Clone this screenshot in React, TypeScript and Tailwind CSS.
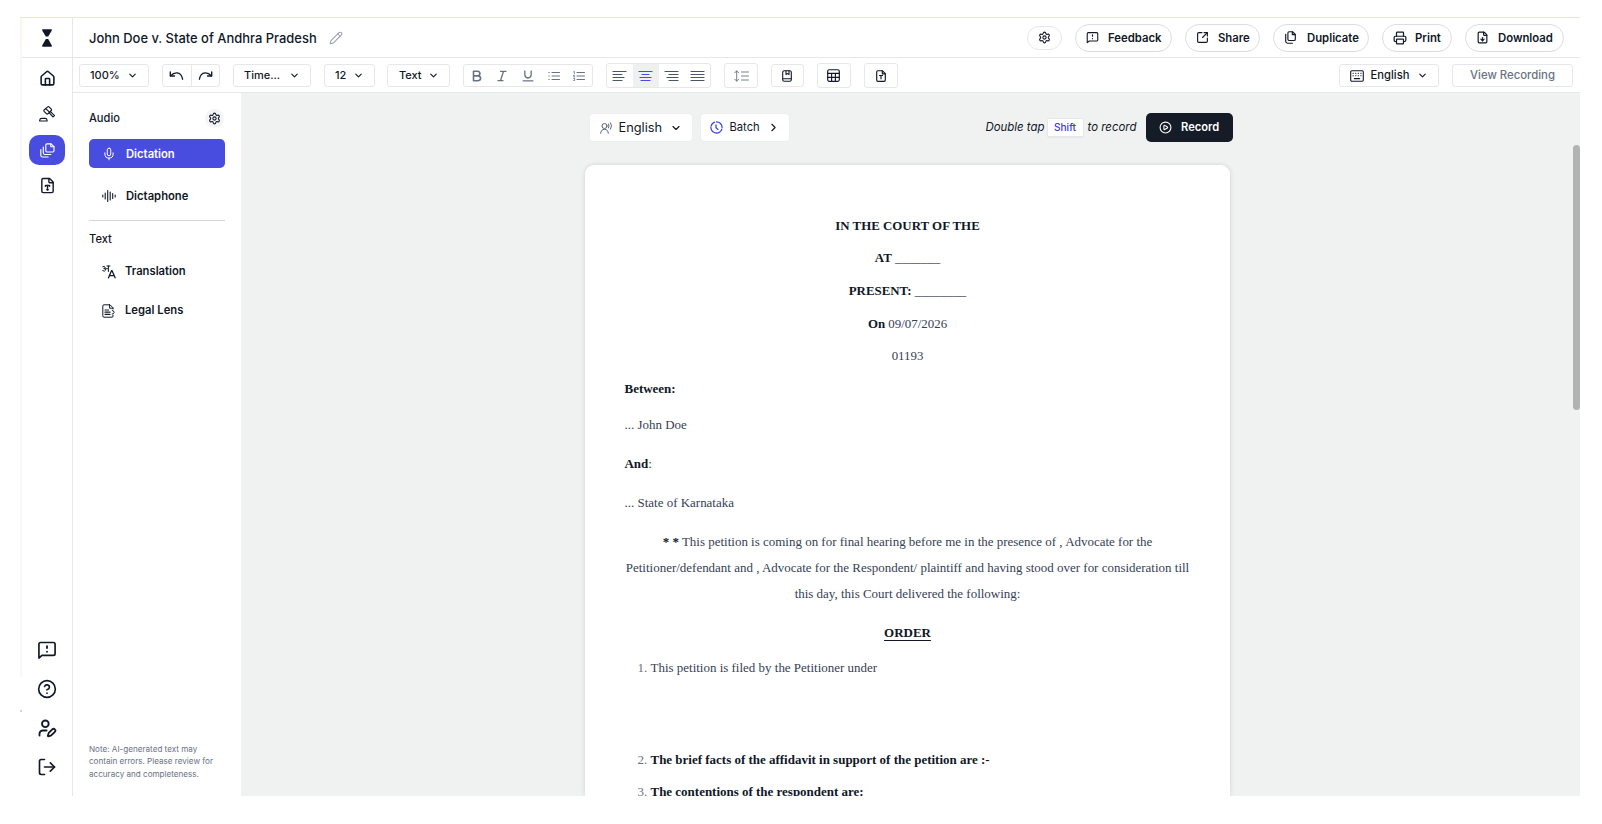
import React from "react";
import type { ReactNode } from "react";
import {
  ChevronDown,
  ChevronRight,
  CirclePlay,
  CircleQuestionMark,
  FileDown,
  FileType,
  House,
  LogOut,
  Mic,
  Pencil,
  Printer,
  Settings,
  SquareArrowOutUpRight,
  UserPen,
} from "lucide-react";

type IconProps = { className?: string };

const stroke = {
  fill: "none",
  stroke: "currentColor",
  strokeLinecap: "round" as const,
  strokeLinejoin: "round" as const,
};

function HourglassLogo() {
  return (
    <svg className="h-[18px] w-[10px] text-[#111827]" viewBox="0 0 10 18" fill="currentColor">
      <path d="M0.3 0.3h9.4v1.5L6.2 7.6H3.8L0.3 1.8z" />
      <path d="M3.8 10h2.4l3.5 6.2v1.6H0.3v-1.6z" />
    </svg>
  );
}

function GavelIcon({ className }: IconProps) {
  return (
    <svg className={className} viewBox="0 0 16 16" {...stroke} strokeWidth={1.150}>
      <path d="M5.100 4 8.700.900q.7-.5 1.300 0l2.300 2.300q.5.700 0 1.300L8.900 7.800q-.7.5-1.300 0L5.100 5.300q-.5-.7 0-1.300z" />
      <path d="M6.800 2.600l3.900 3.800M10.300 6.900l3.700 4 1.500-1.300-4-4" />
      <path d="M.7 15v-.8q.2-1.800 2-1.800h3.400q1.800 0 2 1.800v.8z" />
    </svg>
  );
}

function PagesIcon({ className }: IconProps) {
  return (
    <svg className={className} viewBox="0 0 15 15" {...stroke} strokeWidth={1.150}>
      <path d="M7 .8h4l3 2.800v4.200q0 1.200-1.200 1.200H7Q5.800 9 5.800 7.800V2Q5.800.8 7 .8z" />
      <path d="M10.800.8v2.900h3.100" />
      <path d="M3.300 4v5.700q0 1.800 1.800 1.800h5.700" />
      <path d="M.8 6.600v5.600Q.8 14 2.600 14h5.500" />
    </svg>
  );
}

function DuplicateIcon() {
  return (
    <svg className="h-[13px] w-[11px]" viewBox="0 0 11 13" {...stroke} strokeWidth={1.150}>
      <path d="M4.200.7h3.300l2.800 2.800v4.700q0 1.300-1.300 1.300H4.200Q2.900 9.500 2.900 8.200V2Q2.900.700 4.200.700z" />
      <path d="M7.300.8v2.800h2.900M.7 3.300v7q0 1.900 1.900 1.900h4.800" />
    </svg>
  );
}

function MessageIcon({ className }: IconProps) {
  return (
    <svg className={className} viewBox="0 0 24 24" {...stroke} strokeWidth={2}>
      <path d="M2.300 21.600V5q0-2 2-2h15.400q2 0 2 2v11.500q0 2-2 2H6z" />
      <path d="M12 7.300v2.400M12 13.900v.2" strokeWidth={2.200} />
    </svg>
  );
}

function WaveIcon({ className }: IconProps) {
  return (
    <svg className={className} viewBox="0 0 14 14" {...stroke} strokeWidth={1.100}>
      <path d="M.8 6v2M3.200 4v6M5.700 1.500v11M8.200 3v8M10.700 4.500v5M13.200 6v2" />
    </svg>
  );
}

function TranslateIcon({ className }: IconProps) {
  return (
    <svg className={className} viewBox="0 0 14 14" {...stroke} strokeWidth={1}>
      <path d="M.8 1.700q2-.9 2.400.5.1 1.200-1.500 1.300 2 0 1.900 1.600Q3 6.900.7 5.700M3.600 3.700h1.900M5 1h3M6.400 1v5.500" />
      <path d="M6.500 12.800 9.600 5.600h.4l3.100 7.200M7.600 10.600h4.400" strokeWidth={1.300} />
    </svg>
  );
}

function LensIcon({ className }: IconProps) {
  return (
    <svg className={className} viewBox="0 0 13 14" {...stroke} strokeWidth={1}>
      <path d="M11 5V3.800L8 .8H2Q.8.800.8 2v9.800Q.8 13.200 2 13.200h8q1 0 1-1v-1" />
      <path d="M7.600.8v3.400H11" />
      <path d="M3 6h3.500M3 8.200h5M3 10.300h5" strokeWidth={1.200} />
      <path d="M10.200 6.400q2 .3 1.900 2-.2 1.600-1.900 1.700" />
    </svg>
  );
}

function UndoIcon({ className }: IconProps) {
  return (
    <svg className={className} viewBox="0 0 15 10" {...stroke} strokeWidth={1.350}>
      <path d="M1.300 1v4h4.200" />
      <path d="M1.700 4.700Q4.500 1.700 8 1.900q4.500.4 5.600 6.300" />
    </svg>
  );
}

function AlignIcon({ lines }: { lines: [number, number][] }) {
  return (
    <svg className="h-[12px] w-[15px]" viewBox="0 0 15 12" {...stroke} strokeWidth={1.200}>
      {lines.map(([from, to], i) => (
        <path key={i} d={`M${from} ${1.500 + i * 3}H${to}`} />
      ))}
    </svg>
  );
}

function BulletListIcon({ numbered }: { numbered?: boolean }) {
  return (
    <svg className="h-[12px] w-[12px]" viewBox="0 0 12 12" {...stroke} strokeWidth={1.100}>
      <path d="M4 2.500h7.500M4 6h7.500M4 9.500h7.500" />
      {numbered ? (
        <path d="M.6 1.800l.8-.5v2.500M.5 5.500h1.200L.6 7h1.200M.6 8.500h1.100v2H.6" strokeWidth={0.800} />
      ) : (
        <path d="M.9 2.500h.3M.9 6h.3M.9 9.500h.3" strokeWidth={1.200} />
      )}
    </svg>
  );
}

function LineHeightIcon() {
  return (
    <svg className="h-[12px] w-[15px] text-gray-500" viewBox="0 0 15 12" {...stroke} strokeWidth={0.900}>
      <path d="M2.700 1v10M.8 2.800 2.700.8l1.900 2M.8 9.200l1.900 2 1.900-2" />
      <path d="M7.500 2h7M7.500 6h7M7.500 10h7" />
    </svg>
  );
}

function NotebookIcon() {
  return (
    <svg className="h-[12px] w-[10px]" viewBox="0 0 10 12" {...stroke} strokeWidth={1.100}>
      <rect x="0.700" y="0.700" width="8.600" height="10.600" rx="1.500" />
      <path d="M.8 8.700h8.400M4 .8v3.800l1.500-1 1.500 1V.8" />
    </svg>
  );
}

function GridIcon() {
  return (
    <svg className="h-[13px] w-[13px]" viewBox="0 0 13 13" {...stroke} strokeWidth={1.150}>
      <rect x="0.700" y="0.700" width="11.600" height="11.600" rx="1.500" />
      <path d="M.7 4.400h11.600M.7 8.400h11.600M4.600 4.400v7.900M8.400 4.400v7.900" />
    </svg>
  );
}

function FileArrowIcon() {
  return (
    <svg className="h-[12px] w-[10px]" viewBox="0 0 10 12" {...stroke} strokeWidth={1.150}>
      <path d="M6.300.7H2Q.7.700.7 2v8q0 1.300 1.300 1.300h6q1.300 0 1.300-1.300V3.700z" />
      <path d="M6.300.8v3h3M3.500 5.500h3M5 5.500v3.300" />
    </svg>
  );
}

function KeyboardIcon() {
  return (
    <svg className="h-[12px] w-[14px]" viewBox="0 0 14 12" {...stroke} strokeWidth={1.100}>
      <rect x="0.700" y="0.700" width="12.600" height="10.600" rx="1.200" />
      <path d="M3 3.300h.3M5.600 3.300h.3M8.200 3.300h.3M10.800 3.300h.3M3 5.800h.3M5.600 5.800h.3M8.200 5.800h.3M10.800 5.800h.3M4.300 8.600h5.400" />
    </svg>
  );
}

function SpeakerIcon() {
  return (
    <svg className="h-[12px] w-[13px] text-gray-600" viewBox="0 0 13 12" {...stroke} strokeWidth={0.900}>
      <circle cx="4.500" cy="4" r="2.500" />
      <path d="M.7 11.300q.3-4 3.800-4t3.800 4M8.500 2q1.200 1.900 0 4M10.500.8q2.200 3.100 0 6.400" />
    </svg>
  );
}

function BatchIcon() {
  return (
    <svg className="h-[13px] w-[13px] text-[#4040e6]" viewBox="0 0 13 13" {...stroke} strokeWidth={1.250}>
      <path d="M4.500 1.200A5.600 5.600 0 1 0 11.800 8.200" strokeDasharray="5.500 1.200" />
      <path d="M6.500.9A5.600 5.600 0 0 1 12.100 6.500M6 3.800v2.900l2 1.700" />
    </svg>
  );
}

function PillButton({ className, icon, children }: { className: string; icon: ReactNode; children: ReactNode }) {
  return (
    <button
      className={`flex h-[28px] shrink-0 items-center rounded-full border border-gray-300/80 text-[11.330px] font-semibold whitespace-nowrap ${className}`}
    >
      <span className="flex w-[22px] shrink-0">{icon}</span>
      <span className="mt-[1.500px]">{children}</span>
    </button>
  );
}

function SelectBox({ className, children }: { className: string; children: ReactNode }) {
  return (
    <button
      className={`flex h-[23px] shrink-0 items-center justify-between rounded-[3px] border border-gray-200 text-[11px] font-[550] ${className}`}
    >
      {children}
      <ChevronDown size={11} strokeWidth={2.400} />
    </button>
  );
}

function RailLink({ className, children }: { className: string; children: ReactNode }) {
  return <a className={`flex w-[36px] items-center justify-center ${className}`}>{children}</a>;
}

function Rail() {
  return (
    <nav className="flex w-[51px] shrink-0 flex-col items-center border-r border-gray-200 text-[#111827]">
      <div className="flex h-[40px] w-full shrink-0 items-center justify-center border-b border-gray-200">
        <HourglassLogo />
      </div>
      <RailLink className="mt-[10px] h-[20px]">
        <House size={17} strokeWidth={2.200} />
      </RailLink>
      <RailLink className="mt-[16px] h-[20px]">
        <GavelIcon className="h-[16px] w-[16px]" />
      </RailLink>
      <RailLink className="mt-[11px] h-[30px] rounded-[10px] bg-[#484de0] text-white">
        <PagesIcon className="h-[15px] w-[15px]" />
      </RailLink>
      <RailLink className="mt-[10px] h-[20px]">
        <FileType size={17} strokeWidth={2} />
      </RailLink>
      <div className="mt-auto mb-[19px] flex flex-col gap-[19px]">
        <RailLink className="h-[20px]">
          <MessageIcon className="-mt-px h-[20px] w-[20px]" />
        </RailLink>
        <RailLink className="h-[20px]">
          <CircleQuestionMark size={20} strokeWidth={2} />
        </RailLink>
        <RailLink className="h-[20px]">
          <UserPen size={20} strokeWidth={2.200} />
        </RailLink>
        <RailLink className="h-[20px]">
          <LogOut size={20} strokeWidth={2} />
        </RailLink>
      </div>
    </nav>
  );
}

function Header() {
  return (
    <header className="flex h-[40px] shrink-0 items-center border-b border-gray-200">
      <h1 className="mt-[1.500px] ml-[16px] text-[12.950px] font-[550] whitespace-nowrap">
        John Doe v. State of Andhra Pradesh
      </h1>
      <Pencil className="ml-[12px] text-gray-400" size={14} strokeWidth={1.800} />
      <div className="mr-[16px] ml-auto flex items-center">
        <button className="mr-[13px] flex h-[24px] w-[35px] items-center justify-center rounded-full border border-gray-200 pr-px">
          <Settings size={13} strokeWidth={2} />
        </button>
        <PillButton className="mr-[13px] w-[97px] pl-[10px]" icon={<MessageIcon className="h-[13px] w-[13px]" />}>
          Feedback
        </PillButton>
        <PillButton className="mr-[13px] w-[75px] pl-[10px]" icon={<SquareArrowOutUpRight size={13} strokeWidth={2.100} />}>
          Share
        </PillButton>
        <PillButton className="mr-[13px] w-[96px] pl-[11px]" icon={<DuplicateIcon />}>
          Duplicate
        </PillButton>
        <PillButton className="mr-[13px] w-[70px] pl-[10px]" icon={<Printer size={14} strokeWidth={2.100} />}>
          Print
        </PillButton>
        <PillButton className="w-[99px] pl-[10px]" icon={<FileDown size={13} strokeWidth={2.200} />}>
          Download
        </PillButton>
      </div>
    </header>
  );
}

function FormatCell({ children }: { children: ReactNode }) {
  return <span className="flex w-[26px] items-center justify-center">{children}</span>;
}

function Toolbar() {
  return (
    <div className="flex h-[35px] shrink-0 items-center shadow-[inset_0_-1px_0_#e5e7eb]">
      <SelectBox className="ml-[6px] w-[70px] pr-[10px] pl-[10px]">100%</SelectBox>
      <div className="ml-[13px] flex h-[23px] w-[58px] shrink-0 divide-x divide-gray-200 rounded-[3px] border border-gray-200">
        <button className="flex flex-1 items-center justify-center">
          <UndoIcon className="h-[10px] w-[15px]" />
        </button>
        <button className="flex flex-1 items-center justify-center">
          <UndoIcon className="h-[10px] w-[15px] -scale-x-100" />
        </button>
      </div>
      <SelectBox className="ml-[13px] w-[78px] pr-[10px] pl-[10px]">Time...</SelectBox>
      <SelectBox className="ml-[13px] w-[51px] pr-[10px] pl-[10px]">12</SelectBox>
      <SelectBox className="ml-[12px] w-[63px] pr-[10px] pl-[11px]">Text</SelectBox>
      <div className="ml-[13px] flex h-[23px] w-[130px] shrink-0 items-center rounded-[3px] border border-gray-200 text-gray-500">
        <FormatCell>
          <svg className="h-[12px] w-[10px]" viewBox="0 0 10 12" {...stroke} strokeWidth={1.600}>
            <path d="M1.500 1.300h4.200q2.200.2 2.200 2.300T5.700 5.900H1.500M1.500 1.300v9.400h4.700q2.400-.3 2.400-2.400T6 5.900" />
          </svg>
        </FormatCell>
        <FormatCell>
          <svg className="h-[12px] w-[10px]" viewBox="0 0 10 12" {...stroke} strokeWidth={1.300}>
            <path d="M3.500 1.300h5.500M1 10.700h5M6.500 1.300l-3 9.400" />
          </svg>
        </FormatCell>
        <FormatCell>
          <svg className="h-[12px] w-[12px]" viewBox="0 0 12 12" {...stroke} strokeWidth={1.300}>
            <path d="M2.800 1v3.800q.2 3 3.200 3.200 3-.2 3.200-3.200V1M1.200 10.900h9.600" />
          </svg>
        </FormatCell>
        <FormatCell>
          <BulletListIcon />
        </FormatCell>
        <FormatCell>
          <BulletListIcon numbered />
        </FormatCell>
      </div>
      <div className="ml-[13px] flex h-[25px] w-[105px] shrink-0 items-stretch rounded-[3px] border border-gray-200 text-gray-600">
        <FormatCell>
          <AlignIcon lines={[[1, 14], [1, 10], [1, 12], [1, 10]]} />
        </FormatCell>
        <span className="flex w-[26px] items-center justify-center bg-[#eff1f1] text-[#4a4ae0]">
          <AlignIcon lines={[[1, 14], [4, 11], [2, 13], [3, 12]]} />
        </span>
        <FormatCell>
          <AlignIcon lines={[[1, 14], [5, 14], [3, 14], [5, 14]]} />
        </FormatCell>
        <FormatCell>
          <AlignIcon lines={[[1, 14], [1, 14], [1, 14], [1, 14]]} />
        </FormatCell>
      </div>
      <button className="ml-[13px] flex h-[25px] w-[34px] shrink-0 items-center justify-center rounded-[3px] border border-gray-200">
        <LineHeightIcon />
      </button>
      <button className="ml-[13px] flex h-[23px] w-[33px] shrink-0 items-center justify-center rounded-[3px] border border-gray-200 pr-px">
        <NotebookIcon />
      </button>
      <button className="ml-[13px] flex h-[25px] w-[34px] shrink-0 items-center justify-center rounded-[3px] border border-gray-200 pr-px">
        <GridIcon />
      </button>
      <button className="ml-[13px] flex h-[25px] w-[34px] shrink-0 items-center justify-center rounded-[3px] border border-gray-200">
        <FileArrowIcon />
      </button>
      <SelectBox className="mr-[13px] ml-auto w-[100px] pr-[10px] pl-[10px]">
        <KeyboardIcon />
        <span className="-ml-[1px] text-[11.200px]">English</span>
      </SelectBox>
      <button className="mr-[7px] flex h-[23px] w-[121px] shrink-0 items-center justify-center rounded-[3px] border border-gray-200 text-[11.350px] font-medium text-gray-500">
        View Recording
      </button>
    </div>
  );
}

function SidePanel() {
  return (
    <aside className="flex w-[168px] shrink-0 flex-col px-[16px] text-[11.250px] font-semibold">
      <div className="mt-[16px] flex h-[20px] items-center justify-between pr-px">
        <h2 className="-mt-[1px] text-[11.100px] font-medium">Audio</h2>
        <button className="-mt-px flex h-[19px] w-[19px] items-center justify-center rounded-full bg-gray-100">
          <Settings size={13} strokeWidth={2} />
        </button>
      </div>
      <button className="mt-[10px] flex h-[29px] items-center rounded-[5px] bg-[#484de0] text-white">
        <span className="flex w-[37px] items-center pl-[13px]">
          <Mic size={14} strokeWidth={1.700} />
        </span>
        <span className="mt-[1px]">Dictation</span>
      </button>
      <button className="mt-[13px] flex h-[29px] items-center">
        <span className="flex w-[37px] items-center pl-[13px]">
          <WaveIcon className="h-[14px] w-[14px]" />
        </span>
        <span className="mt-[1px]">Dictaphone</span>
      </button>
      <hr className="mt-[10px] border-gray-300" />
      <h2 className="mt-[8px] h-[20px] text-[11.100px] leading-[20px] font-medium">Text</h2>
      <button className="mt-[8px] flex h-[29px] items-center">
        <span className="flex w-[36px] items-center pl-[13px]">
          <TranslateIcon className="h-[14px] w-[14px]" />
        </span>
        Translation
      </button>
      <button className="mt-[10px] flex h-[29px] items-center">
        <span className="flex w-[36px] items-center pl-[13px]">
          <LensIcon className="h-[14px] w-[13px]" />
        </span>
        Legal Lens
      </button>
      <p className="mt-auto mb-[16px] text-[8.100px] leading-[12.300px] font-normal whitespace-nowrap text-gray-500">
        Note: AI-generated text may
        <br />
        contain errors. Please review for
        <br />
        accuracy and completeness.
      </p>
    </aside>
  );
}

function DictationBar() {
  return (
    <div className="mr-[347px] ml-[348px] flex h-[29px] shrink-0 items-center">
      <button className="flex h-full w-[104px] items-center rounded-[5px] border border-gray-200/70 bg-white pl-[10px]">
        <SpeakerIcon />
        <span className="ml-[5.500px] text-[12.800px]">English</span>
        <ChevronDown className="ml-[7.500px]" size={12} strokeWidth={2.300} />
      </button>
      <button className="ml-[7px] flex h-full w-[90px] items-center rounded-[5px] border border-gray-200/70 bg-white pl-[9px]">
        <BatchIcon />
        <span className="ml-[6.500px] text-[11.200px]">Batch</span>
        <ChevronRight className="ml-[7px]" size={13} strokeWidth={2} />
      </button>
      <div className="ml-auto flex items-center text-[11.450px]">
        <em>Double tap</em>
        <kbd className="mr-[4px] ml-[2px] flex h-[20px] w-[37px] items-center justify-center rounded-[2px] border border-b-2 border-gray-200 bg-white pt-px font-[Inter] text-[10.100px] font-medium text-[#3b3bdc]">
          Shift
        </kbd>
        <em>to record</em>
      </div>
      <button className="ml-[9.500px] flex h-full w-[87px] items-center rounded-[5px] bg-[#151b27] pl-[13px] text-[11.150px] font-semibold text-white">
        <CirclePlay className="mr-[9px]" size={13} strokeWidth={2} />
        Record
      </button>
    </div>
  );
}

function Page() {
  return (
    <article className="mt-[23px] ml-[344px] w-[645px] flex-1 shrink-0 overflow-hidden rounded-t-[9px] bg-white px-[39px] pt-[47.900px] font-['Liberation_Serif',serif] text-[12.970px] leading-[26px] whitespace-nowrap text-gray-700 shadow-[0_0_5px_rgba(0,0,0,0.13)] [&_b]:text-gray-900">
      <div className="space-y-[6.600px] text-center text-[12.900px]">
        <p>
          <b>IN THE COURT OF THE</b>
        </p>
        <p>
          <b>AT</b> _______
        </p>
        <p>
          <b>PRESENT:</b> ________
        </p>
        <p>
          <b>On</b> 09/07/2026
        </p>
        <p>01193</p>
      </div>
      <p className="mt-[6.800px] pl-[0.500px]">
        <b>Between:</b>
      </p>
      <p className="mt-[9.700px] pl-[0.500px]">... John Doe</p>
      <p className="mt-[13px] pl-[0.500px]">
        <b>And</b>:
      </p>
      <p className="mt-[13.200px] pl-[0.500px]">... State of Karnataka</p>
      <p className="mt-[13.200px] text-center">
        <b>* *</b> This petition is coming on for final hearing before me in the presence of , Advocate for the
        <br />
        Petitioner/defendant and , Advocate for the Respondent/ plaintiff and having stood over for consideration till
        <br />
        this day, this Court delivered the following:
      </p>
      <p className="mt-[13px] text-center">
        <b className="underline decoration-1 underline-offset-[3px]">ORDER</b>
      </p>
      <ol className="pl-[13.500px] [&>li]:flex [&>li>span:first-child]:w-[13px] [&>li>span:first-child]:text-gray-500">
        <li className="mt-[9.300px]">
          <span>1.</span>
          <span>This petition is filed by the Petitioner under</span>
        </li>
        <li className="mt-[65.200px]">
          <span>2.</span>
          <b>The brief facts of the affidavit in support of the petition are :-</b>
        </li>
        <li className="mt-[6.500px]">
          <span>3.</span>
          <b>The contentions of the respondent are:</b>
        </li>
      </ol>
    </article>
  );
}

export default function App() {
  return (
    <div className="h-[824px] w-[1602px] overflow-hidden bg-white pt-[17px] pl-[20px] font-[Inter,sans-serif] text-[#111827]">
      <div className="flex h-[779px] w-[1560px] border-t border-[#ebe5d8]">
        <div className="flex w-[2px] shrink-0 flex-col">
          <div className="h-[27px] bg-[#fdf6e6]" />
          <div className="h-[632px] bg-[#f8f8f8]" />
          <div className="mt-[33px] h-[2px] bg-gray-300" />
        </div>
        <Rail />
        <div className="flex min-w-0 flex-1 flex-col">
          <Header />
          <Toolbar />
          <div className="flex min-h-0 flex-1">
            <SidePanel />
            <main className="relative flex min-w-0 flex-1 flex-col overflow-hidden bg-[#f0f2f1] pt-[20px]">
              <DictationBar />
              <Page />
              <div className="absolute top-[52px] right-0 h-[265px] w-[7px] rounded-full bg-[#b1b2b2]" />
            </main>
          </div>
        </div>
      </div>
    </div>
  );
}
